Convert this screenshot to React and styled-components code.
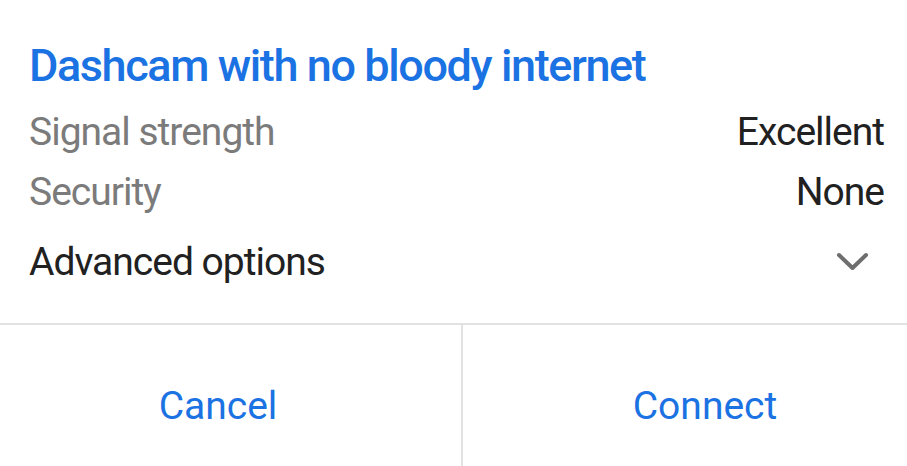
import styled, { createGlobalStyle } from "styled-components";

const GlobalStyle = createGlobalStyle`
  html, body {
    margin: 0;
    padding: 0;
    background: #ffffff;
  }
  body {
    font-family: Roboto, "Noto Sans", sans-serif;
  }
`;

const Dialog = styled.div`
  width: 907px;
  height: 466px;
  background: #ffffff;
  display: flex;
  flex-direction: column;
  overflow: hidden;
`;

const Body = styled.div`
  padding: 38px 23px 0 29px;
  height: 323px;
  box-sizing: border-box;
`;

const Title = styled.h1`
  margin: 0 0 8px 0;
  font-size: 45px;
  font-weight: 500;
  line-height: 56px;
  letter-spacing: -1.4px;
  color: #1b72e2;
`;

const Row = styled.div`
  display: flex;
  justify-content: space-between;
  align-items: center;
  height: ${(p) => p.h || 60}px;
`;

const Label = styled.span`
  font-size: 39px;
  letter-spacing: -1px;
  color: ${(p) => (p.dark ? "#212121" : "#7b7b7b")};
`;

const Value = styled.span`
  font-size: 39px;
  letter-spacing: -1px;
  color: #212121;
`;

const Footer = styled.div`
  flex: 1;
  display: grid;
  grid-template-columns: 461px 1fr;
  border-top: 2px solid #e2e2e2;
`;

const Action = styled.button`
  border: none;
  background: none;
  font-family: inherit;
  font-size: 39px;
  color: #1b72e2;
  padding: 20px ${(p) => p.pr || 0}px 0 ${(p) => p.pl || 0}px;
  display: flex;
  align-items: center;
  justify-content: center;
  & + & {
    border-left: 2px solid #e2e2e2;
  }
`;

const Chevron = styled.svg`
  width: 36px;
  height: 36px;
  margin-right: 13px;
`;

export default function App() {
  return (
    <Dialog>
      <GlobalStyle />
      <Body>
        <Title>Dashcam with no bloody internet</Title>
        <Row>
          <Label>Signal strength</Label>
          <Value>Excellent</Value>
        </Row>
        <Row>
          <Label>Security</Label>
          <Value>None</Value>
        </Row>
        <Row h={80}>
          <Label dark>Advanced options</Label>
          <Chevron viewBox="0 0 36 36">
            <path d="M4 11 L17.5 24 L31 11" fill="none" stroke="#6e6e6e" strokeWidth="4" strokeLinecap="round" strokeLinejoin="round" />
          </Chevron>
        </Row>
      </Body>
      <Footer>
        <Action pr={25}>Cancel</Action>
        <Action pl={40}>Connect</Action>
      </Footer>
    </Dialog>
  );
}
